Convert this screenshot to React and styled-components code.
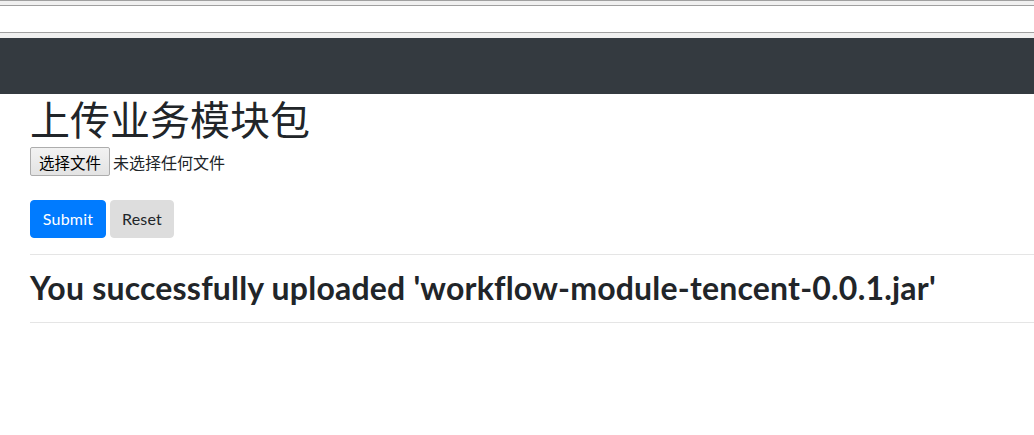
import React from 'react';
import styled, { createGlobalStyle } from 'styled-components';

const GlobalStyle = createGlobalStyle`
  html, body {
    margin: 0;
    padding: 0;
    background: #ffffff;
    overflow: hidden;
  }

  body {
    font-family: Lato, "Noto Sans", "Noto Sans CJK SC", sans-serif;
    color: #212529;
  }
`;

const Page = styled.div`
  width: 1034px;
  height: 435px;
  background: #ffffff;
`;

const FrameStrip = styled.div`
  display: flex;
  flex-direction: column;
`;

const FrameLine = styled.div`
  height: ${({ h }) => h}px;
  background: ${({ bg }) => bg};
`;

const Navbar = styled.nav`
  height: 56px;
  background-color: #343a40;
`;

const Content = styled.main`
  padding-left: 30px;
`;

const Title = styled.h1`
  margin: 0;
  font-family: "Noto Sans CJK SC", sans-serif;
  font-size: 40px;
  font-weight: 400;
  line-height: 48px;
  color: #212529;
`;

const FileRow = styled.div`
  display: flex;
  align-items: center;
  gap: 3px;
  margin-top: 5px;
  height: 29px;
`;

const FileButton = styled.button`
  box-sizing: border-box;
  height: 29px;
  width: 80px;
  padding: 0;
  border: 1px solid #adadad;
  border-radius: 2px;
  background: linear-gradient(#f2f2f2, #e3e3e3);
  font-family: "Noto Sans CJK SC", sans-serif;
  font-size: 15.5px;
  color: #000000;
`;

const FileLabel = styled.span`
  font-family: "Noto Sans CJK SC", sans-serif;
  font-size: 16px;
  color: #212529;
`;

const ButtonRow = styled.div`
  display: flex;
  gap: 4px;
  margin-top: 24px;
`;

const Button = styled.button`
  box-sizing: border-box;
  width: ${({ w }) => w}px;
  height: 38px;
  padding: 0;
  border: 1px solid ${({ primary }) => (primary ? '#007bff' : '#dddddd')};
  border-radius: 4px;
  background: ${({ primary }) => (primary ? '#007bff' : '#dddddd')};
  color: ${({ primary }) => (primary ? '#ffffff' : '#212529')};
  font-family: Lato, "Noto Sans", sans-serif;
  font-size: 16px;
  line-height: 24px;
  letter-spacing: 0.2px;
  text-align: center;
`;

const Rule = styled.hr`
  margin: 16px 0;
  border: 0;
  border-top: 1px solid rgba(0, 0, 0, 0.1);
`;

const Message = styled.h3`
  margin: -2px 0 -1px;
  font-family: Lato, "Noto Sans", sans-serif;
  font-size: 32px;
  font-weight: 700;
  line-height: 38px;
  letter-spacing: 0.2px;
  color: #212529;
  white-space: nowrap;
`;

export default function App() {
  return (
    <Page>
      <GlobalStyle />
      <FrameStrip>
        <FrameLine h={1} bg="#a0a0a0" />
        <FrameLine h={4} bg="#f0f0f0" />
        <FrameLine h={1} bg="#a0a0a0" />
        <FrameLine h={26} bg="#ffffff" />
        <FrameLine h={1} bg="#a0a0a0" />
        <FrameLine h={5} bg="#f0f0f0" />
      </FrameStrip>
      <Navbar />
      <Content>
        <Title>上传业务模块包</Title>
        <FileRow>
          <FileButton type="button">选择文件</FileButton>
          <FileLabel>未选择任何文件</FileLabel>
        </FileRow>
        <ButtonRow>
          <Button primary w={76} type="submit">Submit</Button>
          <Button w={64} type="reset">Reset</Button>
        </ButtonRow>
        <Rule />
        <Message>You successfully uploaded 'workflow-module-tencent-0.0.1.jar'</Message>
        <Rule />
      </Content>
    </Page>
  );
}
